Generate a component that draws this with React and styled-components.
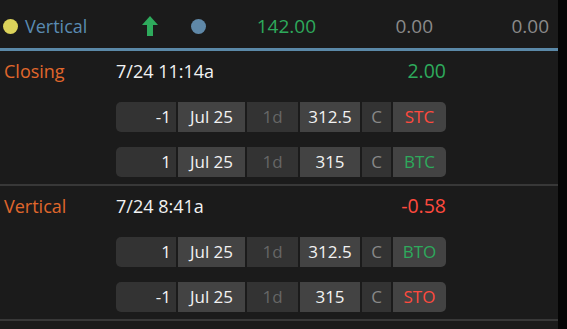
import React from "react";
import styled, { createGlobalStyle } from "styled-components";

const GlobalStyle = createGlobalStyle`
  html, body {
    margin: 0;
    padding: 0;
    background: #1b1b1b;
  }
  body {
    font-family: "Open Sans", "Liberation Sans", sans-serif;
    font-size: 18px;
  }
`;

const colors = {
  green: "#2eaa5c",
  red: "#ff4a3e",
  orange: "#e0672c",
  blue: "#5a8bb2",
  grey: "#8a8a8a",
};

const positions = [
  {
    kind: "Closing",
    time: "7/24 11:14a",
    value: "2.00",
    tone: "green",
    legs: [
      { qty: "-1", side: "STC", strike: "312.5", tone: "red" },
      { qty: "1", side: "BTC", strike: "315", tone: "green" },
    ],
  },
  {
    kind: "Vertical",
    time: "7/24 8:41a",
    value: "-0.58",
    tone: "red",
    legs: [
      { qty: "1", side: "BTO", strike: "312.5", tone: "green" },
      { qty: "-1", side: "STO", strike: "315", tone: "red" },
    ],
  },
];

function UpArrow() {
  return (
    <svg width="16" height="20" viewBox="0 0 16 20">
      <path d="M8 0 L16 9 L11 9 L11 20 L5 20 L5 9 L0 9 Z" fill={colors.green} />
    </svg>
  );
}

function App() {
  return (
    <>
      <GlobalStyle />
      <Screen>
        <Panel>
          <Header>
            <NameCell>
              <Dot color="#dcd35a" />
              <HeaderName>Vertical</HeaderName>
            </NameCell>
            <IconCell>
              <UpArrow />
            </IconCell>
            <IconCell $wide>
              <Dot color="#5f88a8" />
            </IconCell>
            <Num $w={85} $tone="green">142.00</Num>
            <Num $w={117}>0.00</Num>
            <Num $w={116}>0.00</Num>
          </Header>
          {positions.map((p) => (
            <Position key={p.kind + p.time}>
              <Kind>{p.kind}</Kind>
              <TitleLine>
                <Time>{p.time}</Time>
                <Value $tone={p.tone}>{p.value}</Value>
              </TitleLine>
              <Legs>
                {p.legs.map((leg, i) => (
                  <Leg key={i}>
                    <Cell $w={60} $align="right">{leg.qty}</Cell>
                    <Cell $w={67} $light>Jul 25</Cell>
                    <Cell $w={51} $muted>1d</Cell>
                    <Cell $w={60} $light>{leg.strike}</Cell>
                    <Cell $w={29} $dim>C</Cell>
                    <Cell $w={53} $light $tone={leg.tone}>{leg.side}</Cell>
                  </Leg>
                ))}
              </Legs>
            </Position>
          ))}
        </Panel>
        <Scrollbar />
      </Screen>
    </>
  );
}

const Screen = styled.div`
  display: flex;
  width: 567px;
  height: 329px;
  overflow: hidden;
`;

const Panel = styled.div`
  flex: 1;
  display: flex;
  flex-direction: column;
`;

const Scrollbar = styled.div`
  width: 9px;
  background: #050505;
`;

const Header = styled.div`
  display: flex;
  align-items: center;
  height: 24px;
  padding: 14px 9px 10px 3px;
  line-height: 24px;
  border-bottom: 3px solid #5b89a8;
`;

const NameCell = styled.div`
  width: 132px;
  display: flex;
  align-items: center;
  gap: 7px;
`;

const Dot = styled.span`
  width: 15px;
  height: 15px;
  border-radius: 50%;
  background: ${(p) => p.color};
  display: inline-block;
`;

const HeaderName = styled.span`
  color: ${colors.blue};
`;

const IconCell = styled.div`
  width: ${(p) => (p.$wide ? 66 : 30)}px;
  display: flex;
  justify-content: center;
  align-items: center;
`;

const Num = styled.div`
  width: ${(p) => p.$w}px;
  font-size: 19px;
  text-align: right;
  color: ${(p) => (p.$tone ? colors[p.$tone] : colors.grey)};
`;

const Position = styled.div`
  display: grid;
  grid-template-columns: 112px 330px;
  padding: 8px 0 7px 4px;
  border-bottom: 2px solid #383838;
  line-height: 24px;
`;

const Kind = styled.div`
  color: ${colors.orange};
`;

const TitleLine = styled.div`
  display: flex;
  justify-content: space-between;
  align-items: baseline;
`;

const Time = styled.span`
  color: #f2f2f2;
`;

const Value = styled.span`
  font-size: 19.5px;
  color: ${(p) => colors[p.$tone]};
`;

const Legs = styled.div`
  grid-column: 2;
  display: flex;
  flex-direction: column;
  gap: 15px;
  margin-top: 19px;
`;

const Leg = styled.div`
  display: flex;
  gap: 2px;
  height: 30px;
  border-radius: 5px;
  overflow: hidden;
`;

const Cell = styled.div`
  width: ${(p) => p.$w}px;
  box-sizing: border-box;
  font-size: 17px;
  line-height: 30px;
  text-align: ${(p) => p.$align || "center"};
  padding-right: ${(p) => (p.$align === "right" ? "5px" : "0")};
  background: ${(p) => (p.$light ? "#434343" : "#333333")};
  color: ${(p) =>
    p.$tone ? colors[p.$tone] : p.$muted ? "#666666" : p.$dim ? "#888888" : "#f2f2f2"};
`;

export default App;
